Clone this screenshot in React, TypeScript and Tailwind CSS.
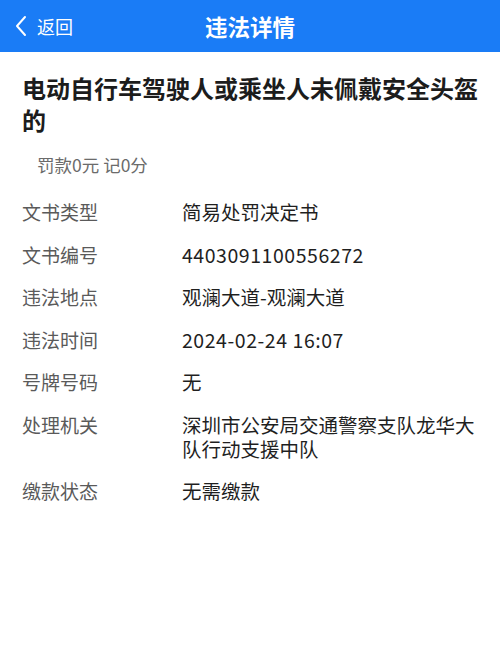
import React from "react";

const rows: [string, string, boolean][] = [
  ["文书类型", "简易处罚决定书", false],
  ["文书编号", "4403091100556272", true],
  ["违法地点", "观澜大道-观澜大道", false],
  ["违法时间", "2024-02-24 16:07", true],
  ["号牌号码", "无", false],
  ["处理机关", "深圳市公安局交通警察支队龙华大队行动支援中队", false],
  ["缴款状态", "无需缴款", false],
];

export default function App() {
  return (
    <div
      className="w-[500px] h-[667px] bg-white overflow-hidden"
      style={{ fontFamily: '"Noto Sans CJK SC", "Noto Sans", sans-serif' }}
    >
      <div className="relative h-[52px] bg-[#1a7cf6] flex items-center justify-center">
        <div className="absolute left-[14px] top-0 h-full flex items-center gap-[9px] text-white">
          <svg width="14" height="22" viewBox="0 0 14 22" fill="none">
            <path d="M11 2 L3 11 L11 20" stroke="white" strokeWidth="2" strokeLinecap="round" strokeLinejoin="round" />
          </svg>
          <span className="text-[18px] leading-none">返回</span>
        </div>
        <span className="text-white text-[22.5px] font-bold leading-none">违法详情</span>
      </div>

      <div className="px-[22px] pt-[20px]">
        <h1 className="text-[24px] leading-[32px] font-bold text-[#1c1c1c]">
          电动自行车驾驶人或乘坐人未佩戴安全头盔的
        </h1>
        <div className="mt-[17px] pl-[15px] text-[17.5px] leading-[24px] text-[#6b6b6b]">
          罚款0元 记0分
        </div>
        <div className="mt-[23px] flex flex-col gap-[18.5px]">
          {rows.map(([k, v, num]) => (
            <div key={k} className="flex leading-[24px]">
              <div className="w-[160px] shrink-0 text-[19px] text-[#5a5a5a]">{k}</div>
              <div
                className={
                  num
                    ? "flex-1 text-[19.5px] text-[#1f1f1f] tracking-[0.55px]"
                    : "flex-1 text-[19.5px] text-[#1f1f1f]"
                }
              >
                {v}
              </div>
            </div>
          ))}
        </div>
      </div>
    </div>
  );
}
